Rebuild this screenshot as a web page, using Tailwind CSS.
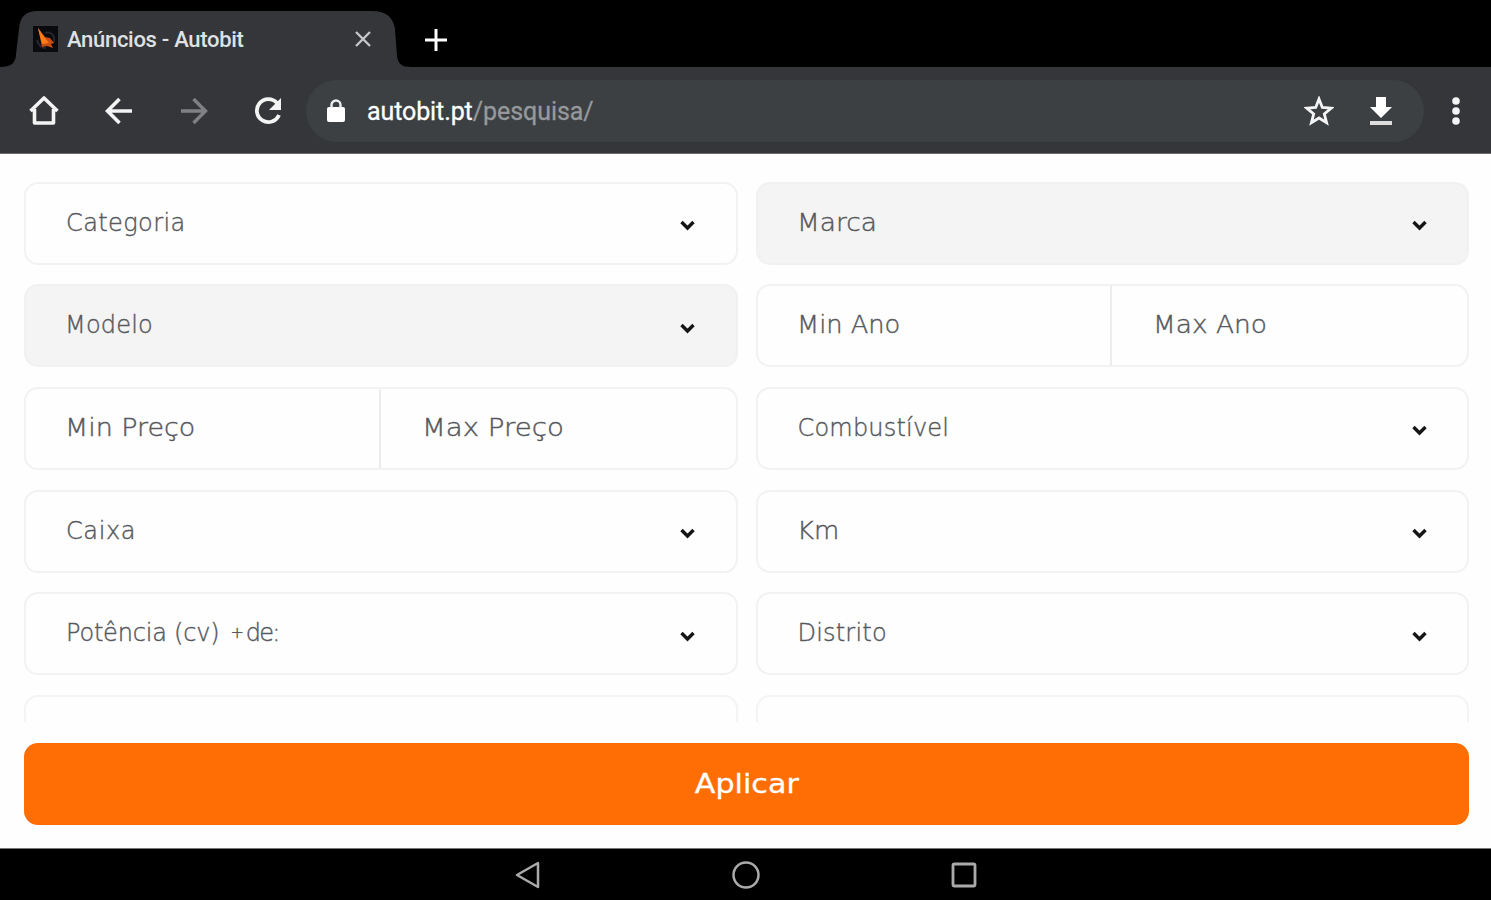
<!DOCTYPE html>
<html lang="pt">
<head>
    <meta charset="UTF-8">
    <meta name="viewport" content="width=device-width, initial-scale=1.0">
    <title>Anúncios - Autobit</title>
    <script src="https://cdn.jsdelivr.net/npm/@tailwindcss/browser@4"></script>
</head>

<body class="flex h-screen flex-col overflow-hidden bg-[#fefefe] font-['Roboto',sans-serif]">

    <!-- Tab strip -->
    <header class="flex h-[67px] shrink-0 items-end bg-black">
        <div class="relative flex h-14 w-[411px] items-center">
            <svg class="absolute inset-0" width="411" height="56" fill="#35363a"><path d="M0 56C11 56 16 52 16 43L19 18C20 5 26 0 38 0H372C386 0 393 6 395 18L397 45C398 53 402 56 411 56Z"/></svg>
            <svg class="relative ml-[33px]" width="25" height="26" viewBox="0 0 25 26"><path fill="#090b0f" d="M0 0h25v26H0z"/><path fill="none" stroke="#27272b" stroke-width="2" d="M12 7c7-2 11 4 8 10M4 14c1 5 5 8 9 8"/><path fill="#c84b10" d="M5 2l7 9 5 1 4 5-3 1 2 4-6-2-5 1-1-5z"/><path fill="#ff7d19" d="M5 2l7 10 4 5-7 1z"/></svg>
            <span class="relative mt-[2px] ml-[9px] w-[180px] text-[22px] leading-none font-medium tracking-[-0.3px] whitespace-nowrap text-[#dfe1e5]">Anúncios - Autobit</span>
            <svg class="relative ml-[107px]" width="18" height="18" fill="none" stroke="#c4c6c9" stroke-width="2.4"><path d="M2 2l14 14M16 2L2 16"/></svg>
        </div>
        <svg class="mb-[16px] ml-[14px]" width="22" height="22" fill="none" stroke="#fff" stroke-width="3"><path d="M11 0v22M0 11h22"/></svg>
    </header>

    <!-- Toolbar -->
    <nav class="flex h-[87px] shrink-0 items-center border-b border-[#6b6c6f] bg-[#35363a] pt-[2px] text-[#f4f4f5]">
        <svg class="ml-[28px]" width="32" height="32" fill="none" stroke="currentColor" stroke-width="3.6" stroke-linejoin="round"><path d="M2.5 16L16 3l13.500 13M6.500 14v14h19V14"/></svg>
        <svg class="ml-[45px]" width="28" height="28" fill="none" stroke="currentColor" stroke-width="3.600"><path d="M27 14H3M14.500 2L2.500 14l12 12"/></svg>
        <svg class="ml-[47px] text-[#808184]" width="28" height="28" fill="none" stroke="currentColor" stroke-width="3.400"><path d="M1 14h24M13.500 2l12 12-12 12"/></svg>
        <svg class="ml-[46px]" width="28" height="28"><path fill="none" stroke="currentColor" stroke-width="3.800" d="M23 6A11.500 11.500 0 1 0 25 18"/><path fill="currentColor" d="M27 1v12H15z"/></svg>
        <div class="ml-[24px] flex h-[62px] w-[1118px] items-center rounded-full bg-[#3c4043]">
            <svg class="mb-px ml-[21px]" width="18" height="24"><rect y="8" width="18" height="15" rx="2" fill="#fff"/><path fill="none" stroke="#eee" stroke-width="2.400" d="M4.500 9V6a4.500 4.500 0 0 1 9 0v3"/></svg>
            <span class="ml-[22px] text-[25px] leading-none tracking-[-0.1px] text-white [-webkit-text-stroke:0.3px]">autobit.pt<span class="tracking-[-0.05px] text-[#96999b]">/pesquisa/</span></span>
            <svg class="ml-auto" width="30" height="30" fill="none" stroke="#f4f4f5" stroke-width="2.800"><path d="M15 3l3.300 8.500 9 .6-7 5.800 2.300 8.900L15 22l-7.600 4.800 2.300-8.900-7-5.800 9-.6z"/></svg>
            <svg class="mr-[31px] ml-[35px]" width="24" height="30"><path fill="#fff" d="M7 1h10v10h6L12 22 1 11h6z"/><path fill="#ddd" d="M1 25h22v4H1z"/></svg>
        </div>
        <svg class="ml-[28px]" width="8" height="28" fill="currentColor"><circle cx="4" cy="4" r="3.800"/><circle cx="4" cy="14" r="3.800"/><circle cx="4" cy="24" r="3.800"/></svg>
    </nav>

    <!-- Search filters -->
    <main class="h-[568px] shrink-0 overflow-hidden px-6 pt-[27.500px]">
        <div class="grid w-[1445px] auto-rows-[83px] grid-cols-2 gap-x-[18px] gap-y-[19.700px] font-['DejaVu_Sans',sans-serif] text-[24px] font-extralight text-[#55585d] [-webkit-text-stroke:0.4px]">
            <div class="flex items-center justify-between rounded-[14px] border-2 border-[#f2f2f3] pr-[41px] pb-px pl-[40px]">
                <span class="tracking-[0.4px]">Categoria</span>
                <svg class="mt-[6px]" width="15" height="11" fill="none" stroke="#151515" stroke-width="3.400"><path d="M1.500 2l6 6 6-6"/></svg>
            </div>
            <div class="flex items-center justify-between rounded-[14px] border-2 border-[#f0f1f1] bg-[#f4f4f4] pr-[40px] pb-px pl-[39px]">
                <span class="origin-left scale-x-[1.1]">Marca</span>
                <svg class="mt-[6px]" width="15" height="11" fill="none" stroke="#151515" stroke-width="3.400"><path d="M1.500 2l6 6 6-6"/></svg>
            </div>
            <div class="flex items-center justify-between rounded-[14px] border-2 border-[#f0f1f1] bg-[#f4f4f4] pr-[41px] pb-px pl-[39px]">
                <span class="tracking-[0.2px]">Modelo</span>
                <svg class="mt-[6px]" width="15" height="11" fill="none" stroke="#151515" stroke-width="3.400"><path d="M1.500 2l6 6 6-6"/></svg>
            </div>
            <div class="grid grid-cols-2 rounded-[14px] border-2 border-[#f2f2f3]">
                <div class="flex items-center border-r-2 border-[#ececee] pb-[2px] pl-[39px]"><span class="origin-left scale-x-[1.07]">Min Ano</span></div>
                <div class="flex items-center pb-[2px] pl-[41px]"><span class="origin-left scale-x-[1.1]">Max Ano</span></div>
            </div>
            <div class="grid grid-cols-2 rounded-[14px] border-2 border-[#f2f2f3]">
                <div class="flex items-center border-r-2 border-[#ececee] pl-[39px]"><span class="origin-left scale-x-[1.12]">Min Preço</span></div>
                <div class="flex items-center pl-[41px]"><span class="origin-left scale-x-[1.15]">Max Preço</span></div>
            </div>
            <div class="flex items-center justify-between rounded-[14px] border-2 border-[#f2f2f3] pr-[40px] pb-px pl-[40px]">
                <span class="tracking-[0.2px]">Combustível</span>
                <svg class="mt-[6px]" width="15" height="11" fill="none" stroke="#151515" stroke-width="3.400"><path d="M1.500 2l6 6 6-6"/></svg>
            </div>
            <div class="flex items-center justify-between rounded-[14px] border-2 border-[#f2f2f3] pr-[41px] pb-px pl-[40px]">
                <span class="tracking-[0.6px]">Caixa</span>
                <svg class="mt-[6px]" width="15" height="11" fill="none" stroke="#151515" stroke-width="3.400"><path d="M1.500 2l6 6 6-6"/></svg>
            </div>
            <div class="flex items-center justify-between rounded-[14px] border-2 border-[#f2f2f3] pr-[40px] pb-px pl-[39px]">
                <span class="origin-left scale-x-[1.08]">Km</span>
                <svg class="mt-[6px]" width="15" height="11" fill="none" stroke="#151515" stroke-width="3.400"><path d="M1.500 2l6 6 6-6"/></svg>
            </div>
            <div class="flex items-center justify-between rounded-[14px] border-2 border-[#f2f2f3] pr-[41px] pb-px pl-[40px]">
                <span class="flex items-center"><span class="tracking-[-0.2px]">Potência (cv)</span><span class="ml-[11px] text-[16px]">+</span><span class="ml-[2px] tracking-[-1.800px]">de:</span></span>
                <svg class="mt-[6px]" width="15" height="11" fill="none" stroke="#151515" stroke-width="3.400"><path d="M1.500 2l6 6 6-6"/></svg>
            </div>
            <div class="flex items-center justify-between rounded-[14px] border-2 border-[#f2f2f3] pr-[40px] pb-px pl-[40px]">
                <span class="tracking-[0.2px]">Distrito</span>
                <svg class="mt-[6px]" width="15" height="11" fill="none" stroke="#151515" stroke-width="3.400"><path d="M1.500 2l6 6 6-6"/></svg>
            </div>
            <div class="rounded-[14px] border-2 border-[#f4f4f5]"></div>
            <div class="rounded-[14px] border-2 border-[#f4f4f5]"></div>
        </div>
    </main>

    <div class="h-[126px] shrink-0 px-6 pt-[21px]">
        <button class="flex h-[82px] w-[1445px] items-center justify-center rounded-[14px] bg-[#ff6d05] font-['DejaVu_Sans',sans-serif] text-[26px] text-white">
            <span class="scale-x-[1.16] [-webkit-text-stroke:0.3px]">Aplicar</span>
        </button>
    </div>

    <!-- Android navigation bar -->
    <footer class="flex h-[52px] shrink-0 items-center justify-center gap-[190px] border-t border-[#777] bg-black">
        <svg width="28" height="28" fill="none" stroke="#aaa" stroke-width="2.500" stroke-linejoin="round"><path d="M24 2v24L3 14z"/></svg>
        <svg width="28" height="28" fill="none" stroke="#aaa" stroke-width="2.500"><circle cx="14" cy="14" r="12.500"/></svg>
        <svg width="28" height="28" fill="none" stroke="#aaa" stroke-width="2.800"><rect x="3" y="3" width="22" height="22" rx="1.500"/></svg>
    </footer>

</body>
</html>
